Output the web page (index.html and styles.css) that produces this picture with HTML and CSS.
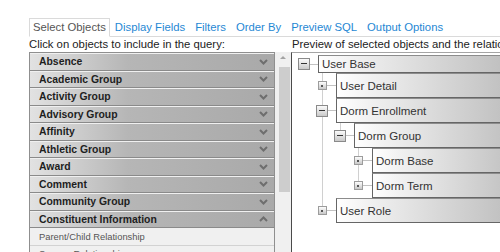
FILE: index.html
```html
<!DOCTYPE html>
<html lang="en">
<head>
    <meta charset="UTF-8">
    <title>Query Designer</title>
    <link rel="stylesheet" href="styles.css">
</head>
<body>

<div class="page">
    <div class="tabs">
        <span class="tab active">Select Objects</span>
        <a href="#" class="tab">Display Fields</a>
        <a href="#" class="tab">Filters</a>
        <a href="#" class="tab">Order By</a>
        <a href="#" class="tab">Preview SQL</a>
        <a href="#" class="tab">Output Options</a>
    </div>

    <div class="columns">
        <div class="col-left">
            <p class="hint">Click on objects to include in the query:</p>
            <div class="list-wrap">
                <div class="list">
                    <div class="group"><span>Absence</span><svg class="chev" viewBox="0 0 9 6"><polyline points="1,1 4.5,4.5 8,1"/></svg></div>
                    <div class="group"><span>Academic Group</span><svg class="chev" viewBox="0 0 9 6"><polyline points="1,1 4.5,4.5 8,1"/></svg></div>
                    <div class="group"><span>Activity Group</span><svg class="chev" viewBox="0 0 9 6"><polyline points="1,1 4.5,4.5 8,1"/></svg></div>
                    <div class="group"><span>Advisory Group</span><svg class="chev" viewBox="0 0 9 6"><polyline points="1,1 4.5,4.5 8,1"/></svg></div>
                    <div class="group"><span>Affinity</span><svg class="chev" viewBox="0 0 9 6"><polyline points="1,1 4.5,4.5 8,1"/></svg></div>
                    <div class="group"><span>Athletic Group</span><svg class="chev" viewBox="0 0 9 6"><polyline points="1,1 4.5,4.5 8,1"/></svg></div>
                    <div class="group"><span>Award</span><svg class="chev" viewBox="0 0 9 6"><polyline points="1,1 4.5,4.5 8,1"/></svg></div>
                    <div class="group"><span>Comment</span><svg class="chev" viewBox="0 0 9 6"><polyline points="1,1 4.5,4.5 8,1"/></svg></div>
                    <div class="group"><span>Community Group</span><svg class="chev" viewBox="0 0 9 6"><polyline points="1,1 4.5,4.5 8,1"/></svg></div>
                    <div class="group"><span>Constituent Information</span><svg class="chev" viewBox="0 0 9 6"><polyline points="1,5 4.5,1.5 8,5"/></svg></div>
                    <div class="item">Parent/Child Relationship</div>
                    <div class="item">Spouse Relationship</div>
                </div>
                <div class="scrollbar">
                    <div class="arrow"></div>
                    <div class="thumb"></div>
                </div>
            </div>
        </div>

        <div class="col-right">
            <p class="hint">Preview of selected objects and the relationships between them</p>
            <div class="tree-frame">
                <ul class="tree">
                    <li>
                        <div class="row root"><span class="exp-col"><span class="exp minus"></span></span><span class="gap"></span><span class="label">User Base</span></div>
                        <ul>
                            <li>
                                <div class="row"><span class="exp-col"><span class="exp leaf"></span></span><span class="gap"></span><span class="label">User Detail</span></div>
                            </li>
                            <li>
                                <div class="row"><span class="exp-col"><span class="exp minus"></span></span><span class="gap"></span><span class="label">Dorm Enrollment</span></div>
                                <ul>
                                    <li>
                                        <div class="row"><span class="exp-col"><span class="exp minus"></span></span><span class="gap"></span><span class="label">Dorm Group</span></div>
                                        <ul>
                                            <li>
                                                <div class="row"><span class="exp-col"><span class="exp leaf"></span></span><span class="gap"></span><span class="label">Dorm Base</span></div>
                                            </li>
                                            <li>
                                                <div class="row"><span class="exp-col"><span class="exp leaf"></span></span><span class="gap"></span><span class="label">Dorm Term</span></div>
                                            </li>
                                        </ul>
                                    </li>
                                </ul>
                            </li>
                            <li>
                                <div class="row"><span class="exp-col"><span class="exp leaf"></span></span><span class="gap"></span><span class="label">User Role</span></div>
                            </li>
                        </ul>
                    </li>
                </ul>
            </div>
        </div>
    </div>
</div>

</body>
</html>
```

FILE: styles.css
```css
body {
    margin: 0;
    font-family: "Liberation Sans", Arial, sans-serif;
    background-color: #fff;
    overflow: hidden;
}

.page {
    padding: 18px 0 0 29px;
}

/* tabs */
.tabs {
    display: flex;
    height: 18px;
    border-bottom: 1px solid #dadada;
    font-size: 11.3px;
    line-height: 17px;
}

.tab {
    padding: 1px 5px 0 5px;
    color: #1f88d4;
    text-decoration: none;
}

.tab.active {
    color: #555;
    padding: 0 3px;
    height: 17px;
    border: 1px solid #dadada;
    border-bottom-color: #fff;
    background-color: #fff;
}

/* two columns */
.columns {
    display: grid;
    grid-template-columns: 262px 1fr;
}

.hint {
    margin: 0;
    height: 15px;
    font-size: 11.3px;
    line-height: 15px;
    color: #222;
    white-space: nowrap;
    overflow: hidden;
}

.col-right .hint {
    padding-left: 1px;
}

/* object list */
.list-wrap {
    display: flex;
    height: 200px;
}

.list {
    width: 246px;
    box-sizing: border-box;
    border: 1px solid #8f8f8f;
    border-bottom: none;
    overflow: hidden;
}

.group {
    height: 17.5px;
    box-sizing: border-box;
    border-top: 1px solid #f0f0f0;
    border-bottom: 1px solid #8a8a8a;
    background: linear-gradient(to right, #e2e2e2 0%, #b6b6b6 40%, #a9a9a9 100%);
    display: flex;
    align-items: center;
    justify-content: space-between;
    padding: 0 6px 0 9px;
    font-size: 10.4px;
    font-weight: bold;
    color: #1e1e1e;
}

.chev {
    width: 9px;
    height: 6px;
    fill: none;
    stroke: #6e6e6e;
    stroke-width: 2;
}

.item {
    height: 17.5px;
    box-sizing: border-box;
    background-color: #f0f0f0;
    border-bottom: 1px solid #d2d2d2;
    padding-left: 9px;
    display: flex;
    align-items: center;
    font-size: 9.4px;
    color: #555;
}

.scrollbar {
    width: 16px;
    background-color: #f0f0f0;
    display: flex;
    flex-direction: column;
    align-items: center;
}

.arrow {
    height: 15px;
    width: 16px;
    display: flex;
    justify-content: center;
    align-items: center;
}

.arrow::before {
    content: "";
    border-left: 3px solid transparent;
    border-right: 3px solid transparent;
    border-bottom: 3px solid #a3a3a3;
    margin-bottom: 4px;
}

.thumb {
    width: 11px;
    height: 125px;
    margin-left: 2px;
    background-color: #cdcdcd;
}

/* relationship tree */
.tree-frame {
    width: 260px;
    height: 200px;
    box-sizing: border-box;
    border-left: 1px solid #4a4a4a;
    border-top: 1px solid #a5a5a5;
    padding: 2px 0 0 5px;
    overflow: hidden;
}

.tree, .tree ul {
    list-style: none;
    margin: 0;
    padding: 0;
}

.tree ul {
    padding-left: 18px;
}

.tree li {
    position: relative;
}

.tree ul > li::before {
    content: "";
    position: absolute;
    left: 7px;
    top: 0;
    bottom: 0;
    width: 1px;
    background-color: #d0d0d0;
}

.tree ul > li:last-child::before {
    bottom: auto;
    height: 12px;
}

.row {
    display: flex;
    height: 25px;
    background: linear-gradient(#c2c2c2, #c2c2c2) no-repeat 7px 12px / 14px 1px;
}

.row.root {
    height: 18px;
    background-position: 7px 9px;
}

.exp-col {
    width: 14px;
    flex: none;
    display: flex;
    justify-content: center;
    align-items: center;
}

.exp {
    position: relative;
    box-sizing: border-box;
}

.exp.minus {
    width: 12px;
    height: 12px;
    border: 1px solid #8a8a8a;
    background: linear-gradient(#fbfbfb, #c9c9c9);
}

.exp.minus::after {
    content: "";
    position: absolute;
    left: 2px;
    right: 2px;
    top: 4px;
    height: 1px;
    background-color: #333;
}

.exp.leaf {
    width: 9px;
    height: 9px;
    border: 1px solid #9c9c9c;
    background: linear-gradient(#fdfdfd, #c8c8c8);
}

.exp.leaf::after {
    content: "";
    position: absolute;
    left: 2.5px;
    top: 2.5px;
    width: 2px;
    height: 2px;
    background-color: #555;
}

.gap {
    width: 7px;
    flex: none;
}

.label {
    flex: 1;
    box-sizing: border-box;
    border: 1px solid #666;
    border-top-color: #8c8c8c;
    border-right: none;
    background: linear-gradient(to right, #fff 0%, #f1f1f1 15%, #b0b0b0 100%);
    display: flex;
    align-items: center;
    padding-left: 3px;
    font-size: 11.5px;
    color: #333;
    white-space: nowrap;
}
```
